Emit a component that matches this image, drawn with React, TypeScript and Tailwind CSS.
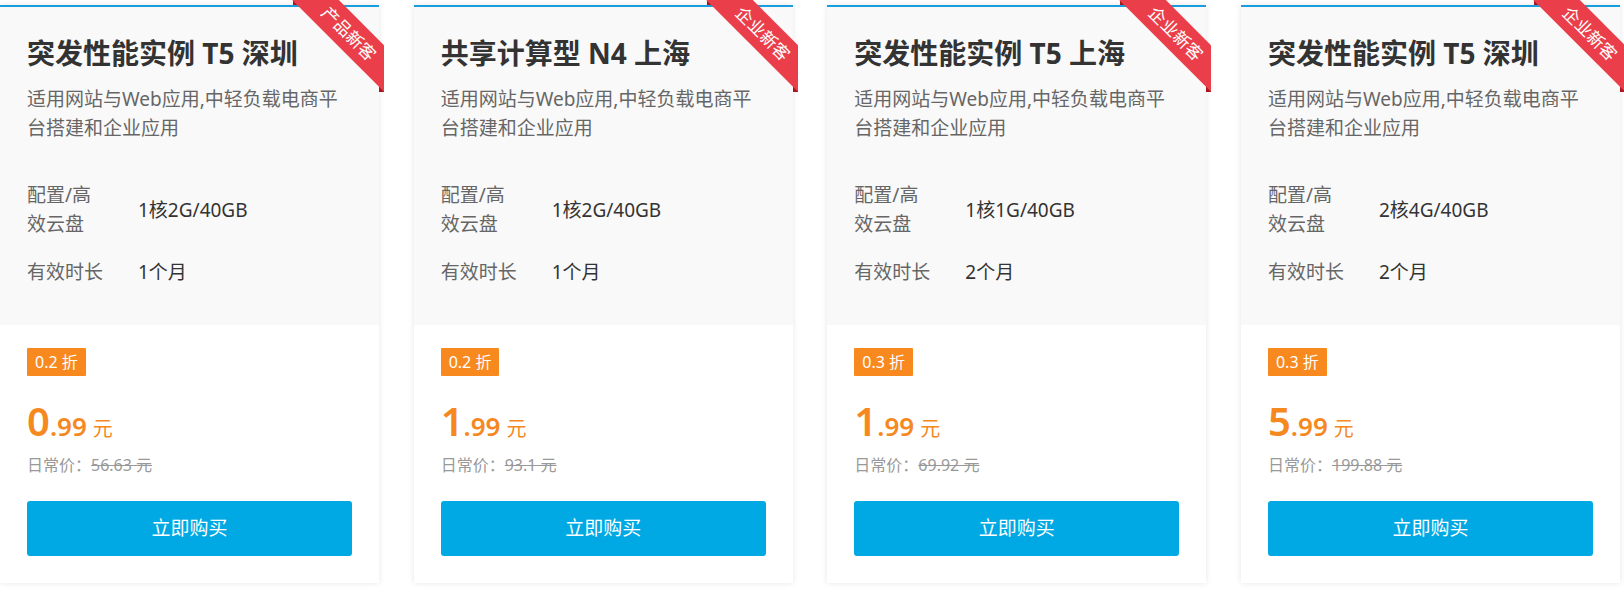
import React from "react";

type Item = {
  title: string;
  spec: string;
  dur: string;
  disc: string;
  big: string;
  small: string;
  orig: string;
  tag: string;
};

const items: Item[] = [
  { title: "突发性能实例 T5 深圳", spec: "1核2G/40GB", dur: "1个月", disc: "0.2 折", big: "0", small: ".99", orig: "56.63 元", tag: "产品新客" },
  { title: "共享计算型 N4 上海", spec: "1核2G/40GB", dur: "1个月", disc: "0.2 折", big: "1", small: ".99", orig: "93.1 元", tag: "企业新客" },
  { title: "突发性能实例 T5 上海", spec: "1核1G/40GB", dur: "2个月", disc: "0.3 折", big: "1", small: ".99", orig: "69.92 元", tag: "企业新客" },
  { title: "突发性能实例 T5 深圳", spec: "2核4G/40GB", dur: "2个月", disc: "0.3 折", big: "5", small: ".99", orig: "199.88 元", tag: "企业新客" },
];

function Ribbon({ text }: { text: string }) {
  return (
    <>
      <svg className="absolute top-[-7px] right-[-5px] w-[96px] h-[100px] pointer-events-none" viewBox="288 0 96 100">
        <polygon points="298,5 293,5 293,0" fill="#a8161f" />
        <polygon points="379,84 384,89 384,92 379,92" fill="#a8161f" />
      </svg>
      <div className="absolute top-[-7px] right-[-5px] w-[96px] h-[96px] overflow-hidden pointer-events-none">
        <div className="absolute left-[-14px] top-[17px] w-[150px] h-[33px] rotate-45 bg-[#ea3f4a] flex items-center justify-center text-white text-[17px] leading-none">
          {text}
        </div>
      </div>
    </>
  );
}

function Card({ it }: { it: Item }) {
  return (
    <div className="relative w-[379px] shrink-0 bg-white border-t-2 border-[#1a9ddc] shadow-[0_0_6px_rgba(0,0,0,0.10)]">
      <div className="bg-[#f9f9f9] px-[27px] pt-[28px] pb-[38px]">
        <div className="text-[28px] font-bold leading-[36px] text-[#333] whitespace-nowrap">{it.title}</div>
        <div className="mt-[14px] text-[19px] leading-[29px] text-[#666] pr-[2px]">
          适用网站与Web应用,中轻负载电商平台搭建和企业应用
        </div>
        <div className="mt-[38px] grid grid-cols-[80px_1fr] gap-x-[31px] gap-y-[18.5px] items-center text-[19px] leading-[29px]">
          <div className="text-[#666]">配置/高效云盘</div>
          <div className="text-[#333]">{it.spec}</div>
          <div className="text-[#666]">有效时长</div>
          <div className="text-[#333]">{it.dur}</div>
        </div>
      </div>
      <div className="px-[27px] pt-[23px] pb-[27px]">
        <div className="inline-flex h-[28px] items-center px-[8px] bg-[#f7891f] text-white text-[16px] leading-none rounded-[1px]">
          {it.disc}
        </div>
        <div className="mt-[25.5px] h-[40px] flex items-baseline text-[#f5891f] leading-none">
          <span className="text-[40px] font-semibold">{it.big}</span>
          <span className="text-[26px] font-semibold">{it.small}</span>
          <span className="text-[20px] ml-[6px]">元</span>
        </div>
        <div className="mt-[11.5px] text-[16px] leading-[24px] text-[#999]">
          日常价：<span className="line-through">{it.orig}</span>
        </div>
        <button className="mt-[24px] h-[55px] w-full rounded-[3px] bg-[#00a9e3] text-white text-[19px] flex items-center justify-center">
          立即购买
        </button>
      </div>
      <Ribbon text={it.tag} />
    </div>
  );
}

export default function App() {
  return (
    <div className="w-[1624px] h-[590px] bg-white overflow-hidden font-[family-name:'Noto_Sans','Noto_Sans_CJK_SC',sans-serif]">
      <div className="flex gap-[34.67px] pt-[5px]">
        {items.map((it, i) => (
          <Card key={i} it={it} />
        ))}
      </div>
    </div>
  );
}
